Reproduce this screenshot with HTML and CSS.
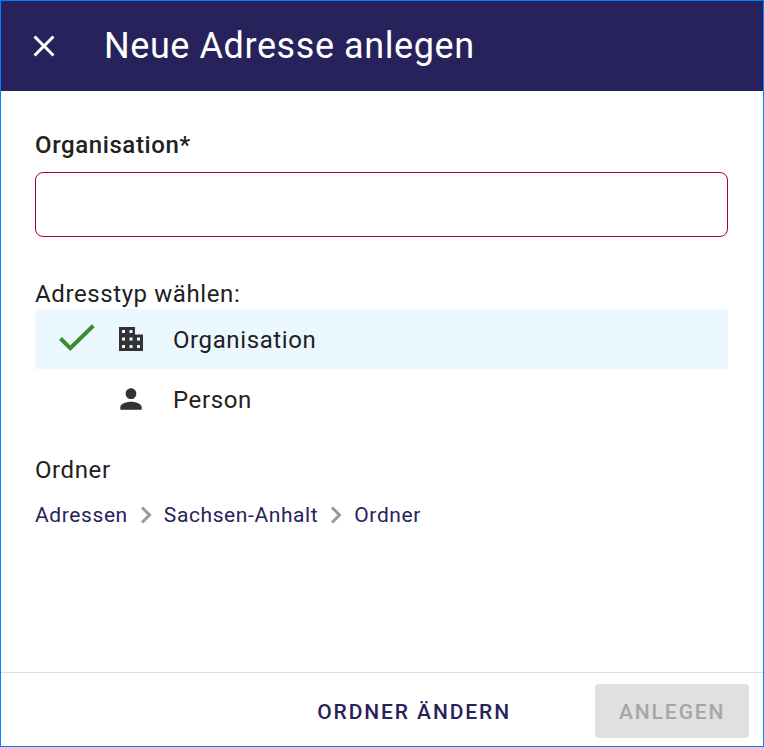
FILE: index.html
```html
<!DOCTYPE html>
<html lang="de">
<head>
<meta charset="utf-8">
<title>Neue Adresse anlegen</title>
<link rel="stylesheet" href="styles.css">
</head>
<body>
<main class="dialog">
  <header class="toolbar">
    <svg class="close" viewBox="0 0 24 24"><path d="M19 6.41L17.59 5 12 10.59 6.41 5 5 6.41 10.59 12 5 17.59 6.41 19 12 13.41 17.59 19 19 17.59 13.41 12z"/></svg>
    <h1>Neue Adresse anlegen</h1>
  </header>
  <section class="content">
    <label class="field-label" for="org">Organisation*</label>
    <input class="field" id="org" type="text">
    <div class="type-label">Adresstyp wählen:</div>
    <div class="option selected">
      <svg class="check" viewBox="0 0 36 28"><path d="M1.500 13.500L11.300 23.200 34.300 .7"/></svg>
      <svg class="icon" viewBox="0 0 26 26"><path fill-rule="evenodd" d="M1 1h16v7.500h8V25H1zM4 4v3h3V4zM11.500 4v3h3V4zM4 11.500v3h3v-3zM11.500 11.500v3h3v-3zM4 19v3h3v-3zM11.500 19v3h3v-3zM19 11.500v3h3v-3zM19 19v3h3v-3z"/></svg>
      <span class="option-text">Organisation</span>
    </div>
    <div class="option">
      <span class="check"></span>
      <svg class="icon" viewBox="2.25 2.25 19.5 19.5"><path d="M12 12c2.21 0 4-1.79 4-4s-1.79-4-4-4-4 1.79-4 4 1.79 4 4 4zm0 2c-2.67 0-8 1.34-8 4v2h16v-2c0-2.66-5.33-4-8-4z"/></svg>
      <span class="option-text">Person</span>
    </div>
    <div class="folder-label">Ordner</div>
    <nav class="crumbs">
      <span>Adressen</span>
      <svg class="chevron" viewBox="0 0 12 18"><path d="M2 1.500L9.500 9 2 16.500"/></svg>
      <span>Sachsen-Anhalt</span>
      <svg class="chevron" viewBox="0 0 12 18"><path d="M2 1.500L9.500 9 2 16.500"/></svg>
      <span>Ordner</span>
    </nav>
  </section>
  <footer class="actions">
    <button class="change">ORDNER ÄNDERN</button>
    <button class="create" disabled>ANLEGEN</button>
  </footer>
</main>
</body>
</html>
```
FILE: styles.css
```css
* { box-sizing: border-box; }
body { margin: 0; font-family: Roboto, sans-serif; color: #212121; }
.dialog { height: 747px; display: flex; flex-direction: column; border: 1px solid #0080ff; background: #fff; }
.toolbar { height: 90px; flex: none; display: flex; align-items: center; background: #28225c; color: #fff; padding-left: 25px; }
.close { width: 36px; height: 36px; fill: #fff; margin-right: 42px; }
h1 { margin: 0; font-size: 36px; line-height: 48px; font-weight: 400; letter-spacing: .58px; white-space: nowrap; }
.content { flex: 1; padding: 38px 35px 0 34px; font-size: 24px; letter-spacing: .6px; }
.field-label { display: block; height: 32px; line-height: 32px; font-weight: 500; }
.field { display: block; width: 100%; height: 65px; margin-top: 11px; border: 1px solid #b00020; border-radius: 8px; background: #fff; padding: 0 16px; font: inherit; outline: none; }
.type-label { margin-top: 41px; height: 31px; line-height: 32px; }
.option { display: flex; align-items: center; height: 60px; padding-left: 24px; }
.option-text { padding-top: 2px; }
.selected { background: #ecf8ff; }
.check { width: 36px; height: 28px; margin-right: 23px; fill: none; stroke: #388e2c; stroke-width: 4; overflow: visible; }
.icon { width: 26px; height: 26px; fill: #333; margin-right: 29px; }
.folder-label { margin-top: 25px; line-height: 32px; }
.crumbs { display: flex; align-items: center; height: 28px; margin-top: 15px; font-size: 21px; color: #28225c; white-space: nowrap; }
.chevron { width: 12px; height: 18px; margin: 0 12px; fill: none; stroke: #999; stroke-width: 3; }
.actions { height: 74px; flex: none; display: flex; align-items: center; justify-content: flex-end; padding: 3px 14px 0; border-top: 1px solid #ddd; }
button { font: 500 21px/32px Roboto, sans-serif; letter-spacing: 1.9px; border: 0; padding: 2px 24px 0; height: 54px; border-radius: 4px; white-space: nowrap; }
.change { background: none; color: #28225c; margin-right: 60px; }
.create { width: 154px; background: #e0e0e0; color: #a6a6a6; }
```
